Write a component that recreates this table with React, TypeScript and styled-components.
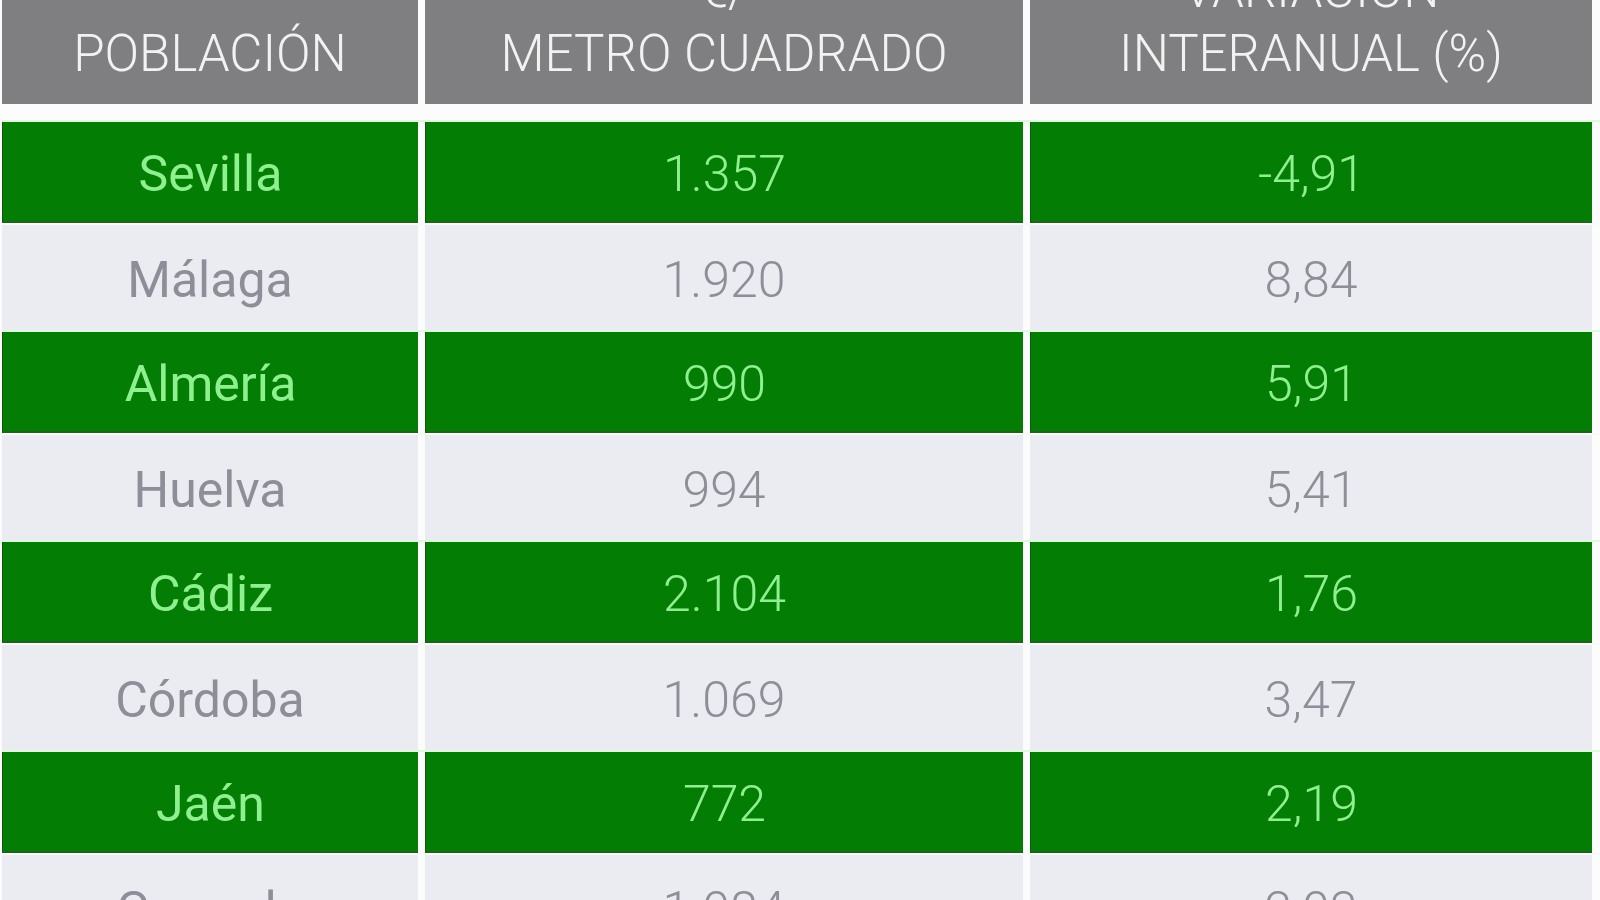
import styled, { createGlobalStyle } from 'styled-components';

const GlobalStyle = createGlobalStyle`
  html, body {
    margin: 0;
    padding: 0;
    background: #fbfcfb;
    overflow: hidden;
  }
  body {
    font-family: Roboto, "Liberation Sans", Arial, sans-serif;
  }
`;

const Table = styled.div`
  display: flex;
  flex-direction: column;
  width: 1600px;
  margin-top: -58px;
  padding-left: 2px;
  box-sizing: border-box;
`;

const Grid = styled.div`
  display: grid;
  grid-template-columns: 416px 598px 562px;
  column-gap: 7px;
`;

const HeaderRow = styled(Grid)`
  margin-bottom: 16px;
`;

const HeaderCell = styled.div`
  display: flex;
  align-items: flex-end;
  justify-content: center;
  box-sizing: border-box;
  height: 162px;
  padding: 16px 8px 18px;
  background: #7f7f81;
  color: #f2f2f2;
  font-size: 51px;
  font-weight: 300;
  line-height: 64px;
  text-align: center;
  text-transform: uppercase;
`;

const BodyRow = styled(Grid)<{ $green: boolean }>`
  height: ${(p) => (p.$green ? '103px' : '107px')};
  box-sizing: border-box;
  border-top: 2px solid ${(p) => (p.$green ? '#dff9df' : '#f6fbf6')};
`;

const Cell = styled.div<{ $green: boolean; $num?: boolean }>`
  display: flex;
  align-items: center;
  justify-content: center;
  box-sizing: border-box;
  padding-top: 5px;
  font-size: 50px;
  font-weight: ${(p) => (p.$num ? 300 : 400)};
  background: ${(p) => (p.$green ? '#037d03' : '#ebebf2')};
  color: ${(p) => (p.$green ? '#8ff08f' : '#8e8e99')};
  border-bottom: ${(p) => (p.$green ? '2px solid #1f611f' : '0')};
  border-left: ${(p) => (p.$green ? '1px solid #0b5a0b' : '0')};
`;

const rows = [
  { city: 'Sevilla', price: '1.357', change: '-4,91' },
  { city: 'Málaga', price: '1.920', change: '8,84' },
  { city: 'Almería', price: '990', change: '5,91' },
  { city: 'Huelva', price: '994', change: '5,41' },
  { city: 'Cádiz', price: '2.104', change: '1,76' },
  { city: 'Córdoba', price: '1.069', change: '3,47' },
  { city: 'Jaén', price: '772', change: '2,19' },
  { city: 'Granada', price: '1.084', change: '2,03' },
];

export default function App() {
  return (
    <>
      <GlobalStyle />
      <Table>
        <HeaderRow>
          <HeaderCell>Población</HeaderCell>
          <HeaderCell>
            €/
            <br />
            Metro cuadrado
          </HeaderCell>
          <HeaderCell>
            Variación
            <br />
            interanual (%)
          </HeaderCell>
        </HeaderRow>
        {rows.map((row, i) => {
          const green = i % 2 === 0;
          return (
            <BodyRow key={row.city} $green={green}>
              <Cell $green={green}>{row.city}</Cell>
              <Cell $green={green} $num>
                {row.price}
              </Cell>
              <Cell $green={green} $num>
                {row.change}
              </Cell>
            </BodyRow>
          );
        })}
      </Table>
    </>
  );
}
